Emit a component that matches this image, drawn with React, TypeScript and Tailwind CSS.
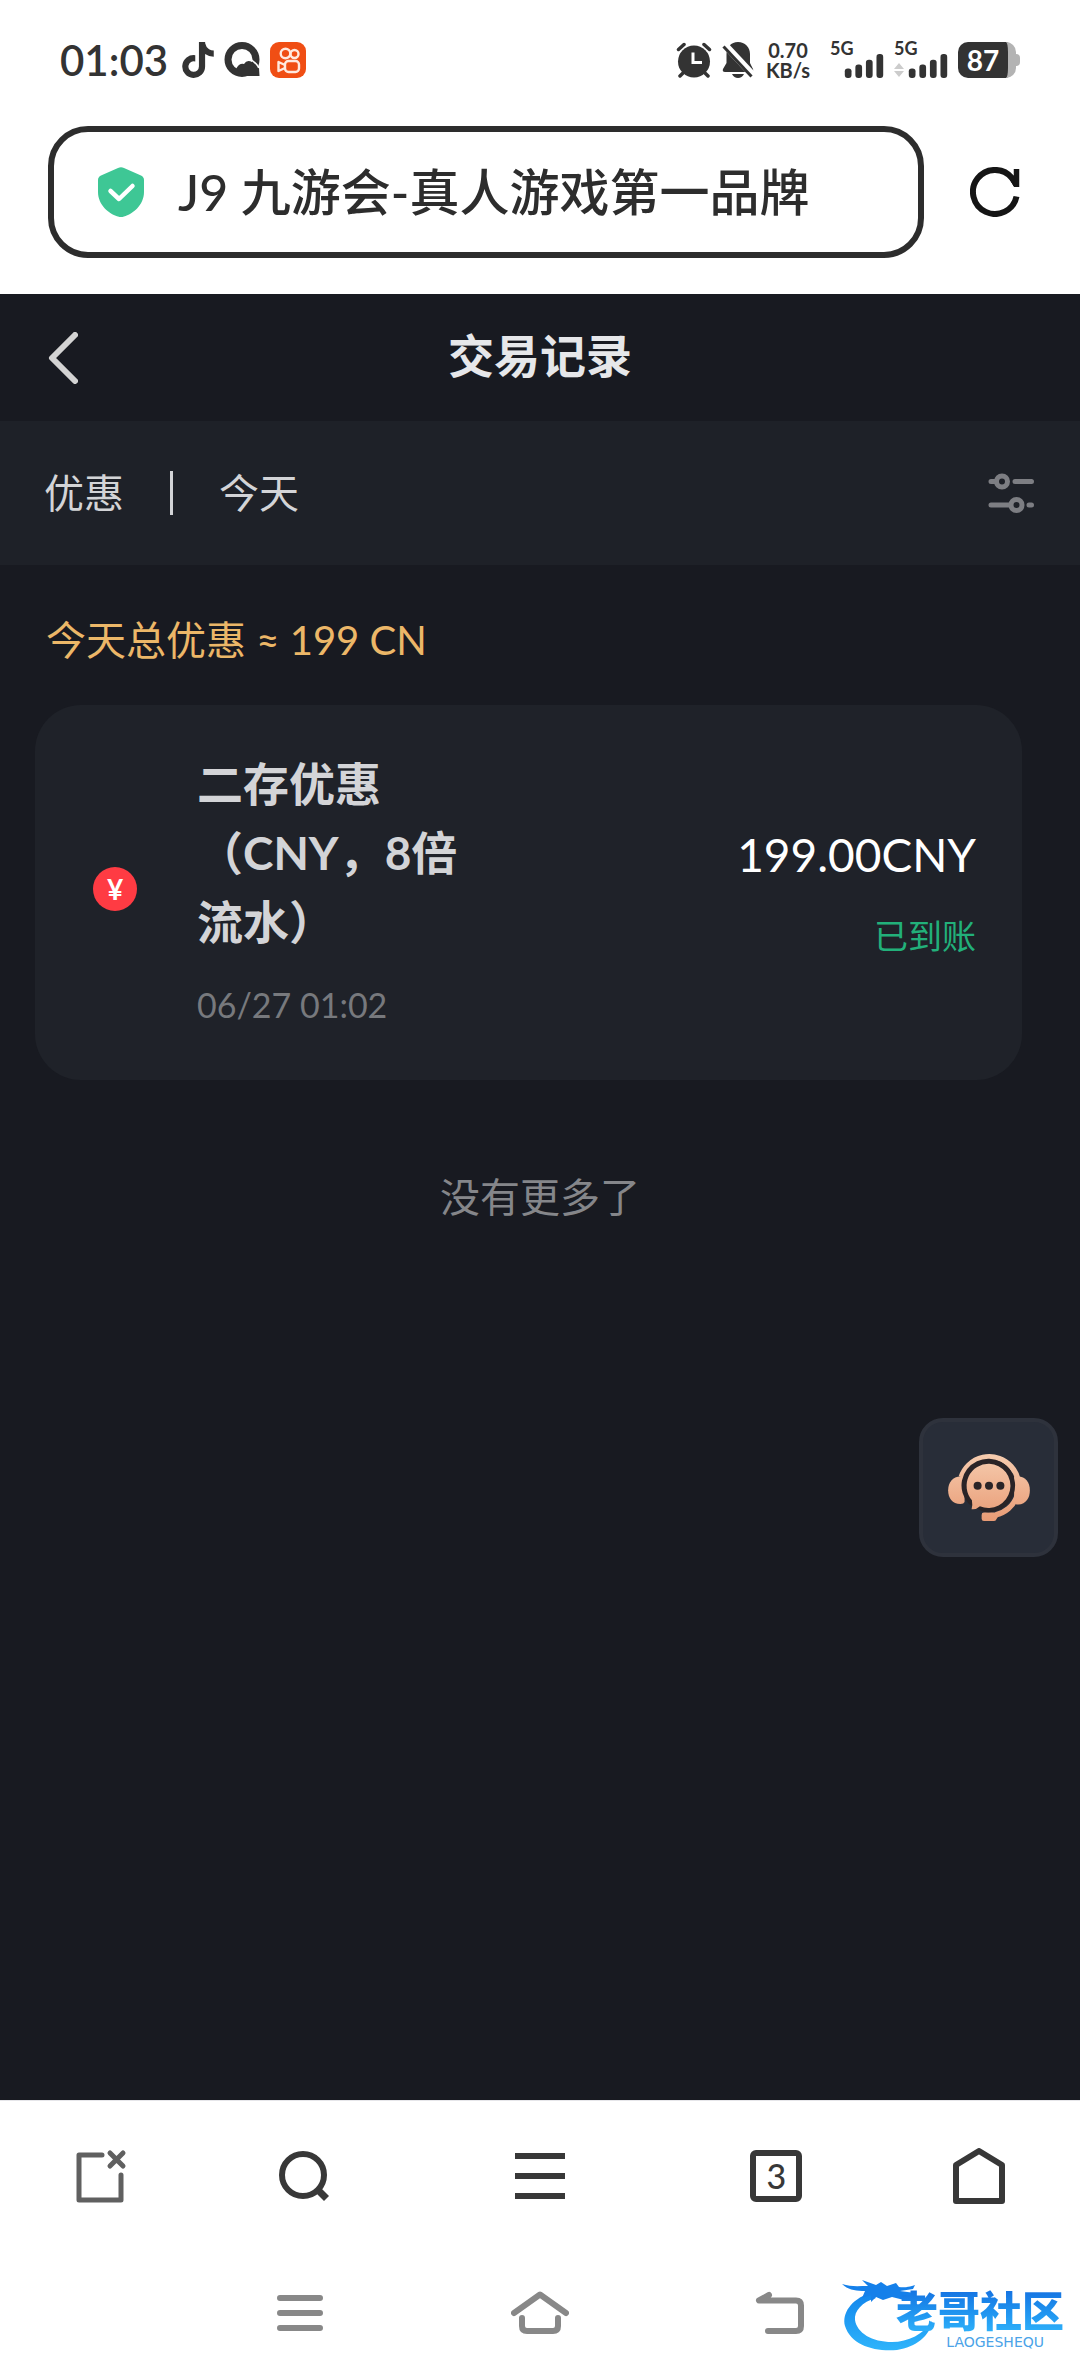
import { useState } from "react";
import { FaTiktok } from "react-icons/fa";

interface BonusRecord {
  id: number;
  title: string;
  time: string;
  amount: string;
  status: string;
}

const RECORDS: BonusRecord[] = [
  { id: 1, title: "二存优惠（CNY，8倍流水）", time: "06/27 01:02", amount: "199.00CNY", status: "已到账" },
];

function SignalBars() {
  return (
    <svg className="w-10 h-6" viewBox="0 0 40 25" fill="#333">
      <rect x="0" y="15" width="7" height="10" rx="3" />
      <rect x="11" y="11" width="7" height="14" rx="3" />
      <rect x="22" y="6" width="7" height="19" rx="3" />
      <rect x="33" y="0" width="7" height="25" rx="3" />
    </svg>
  );
}

function StatusBar() {
  return (
    <div className="h-[120px] pl-[60px] pr-[60px] flex items-center justify-between text-[#333]">
      <div className="flex items-center gap-[10px]">
        <span className="text-[42px] leading-none font-semibold mr-1">01:03</span>
        <FaTiktok className="w-8 h-9" />
        <svg className="w-9 h-9" viewBox="0 0 36 36">
          <circle cx="18" cy="17.5" r="14" fill="none" stroke="#333" strokeWidth="7" />
          <path d="M12 27 Q15 21 20 22 Q23 17 28 20 Q31 25 35 26 L35.500 34 H20 Z" fill="#333" />
          <path d="M25 17 Q31 19 35 26" fill="none" stroke="#fff" strokeWidth="1.500" />
        </svg>
        <svg className="w-9 h-9" viewBox="0 0 36 36">
          <rect width="36" height="36" rx="9" fill="#f04e14" />
          <g fill="none" stroke="#ffe9df" strokeWidth="2.400" strokeLinejoin="round">
            <circle cx="15.500" cy="11.500" r="4.800" />
            <circle cx="24.500" cy="12" r="4" />
            <rect x="15" y="19" width="14" height="11" rx="3.500" />
            <path d="M15 23 L8.500 20 V29 L15 26" />
          </g>
        </svg>
      </div>

      <div className="flex items-center gap-[10px]">
        <svg className="w-9 h-9" viewBox="0 0 36 36">
          <circle cx="18" cy="19.500" r="16" fill="#333" />
          <g fill="none" stroke="#333" strokeWidth="3.500" strokeLinecap="round">
            <path d="M2.500 7.500 L8 2.500 M33.500 7.500 L28 2.500 M7 31 L4 34 M29 31 L32 34" />
          </g>
          <path d="M17 10.500 V20.500 H26" fill="none" stroke="#fff" strokeWidth="3" />
        </svg>
        <svg className="w-8 h-9" viewBox="0 0 32 36">
          <path d="M16 0 C23 0 28 5 28 12 V21 L31 27 Q32 30 29 30 H3 Q0 30 1 27 L4.500 21 V12 C4.500 5 9 0 16 0 Z" fill="#333" />
          <path d="M10 32 H22 Q20 36 16 36 Q12 36 10 32 Z" fill="#333" />
          <path d="M2 2 L31 33" stroke="#fff" strokeWidth="7" />
          <path d="M1.500 4.500 L29.500 34.500" stroke="#333" strokeWidth="3" />
        </svg>
        <div className="mr-2 w-12 flex flex-col items-center text-[20px] leading-5 font-bold">
          <span>0.70</span>
          <span>KB/s</span>
        </div>
        <div className="w-[54px] h-9 flex flex-col">
          <span className="h-3 text-[18px] leading-3 font-bold">5G</span>
          <div className="flex justify-end">
            <SignalBars />
          </div>
        </div>
        <div className="w-[54px] h-9 flex flex-col">
          <span className="h-3 text-[18px] leading-3 font-bold">5G</span>
          <div className="flex justify-between items-end">
            <svg className="w-[10px] h-4" viewBox="0 0 10 16" fill="#ccc">
              <path d="M5 1 L10 7 H0 Z M0 9 H10 L5 15 Z" />
            </svg>
            <SignalBars />
          </div>
        </div>
        <div className="flex items-center">
          <div className="w-[58px] h-9 rounded-[10px] bg-[#333] border-r-8 border-[#b3b3b3] flex items-center justify-center text-white text-[28px] leading-none font-bold">
            87
          </div>
          <div className="w-1 h-3 rounded-r-sm bg-[#b3b3b3]" />
        </div>
      </div>
    </div>
  );
}

function AddressBar() {
  const [address, setAddress] = useState("J9 九游会-真人游戏第一品牌");

  return (
    <div className="flex items-center pl-12 pr-[60px] pt-[6px] pb-9">
      <label className="flex-1 min-w-0 h-[132px] flex items-center gap-[34px] pl-[44px] pr-8 rounded-[40px] border-[6px] border-[#2d2d2d]">
        <svg className="w-[46px] h-[50px] shrink-0" viewBox="0 0 46 50">
          <path d="M20 1 Q23 -.500 26 1 L43 8.500 Q46 10 46 13 V25 C46 38 35 47 26 49.500 Q23 50.500 20 49.500 C11 47 0 38 0 25 V13 Q0 10 3 8.500 Z" fill="#3ec795" />
          <path d="M12.500 24 L21 32 L34.500 19" fill="none" stroke="#fff" strokeWidth="4.500" strokeLinejoin="round" strokeLinecap="round" />
        </svg>
        <input
          type="text"
          aria-label="地址栏"
          value={address}
          onChange={(e) => setAddress(e.target.value)}
          className="flex-1 min-w-0 bg-transparent outline-none text-[50px] leading-[72px] font-medium text-[#2d2d2d]"
        />
      </label>
      <button type="button" aria-label="刷新" className="ml-[46px] cursor-pointer">
        <svg className="w-[50px] h-[50px]" viewBox="0 0 50 50" fill="none" stroke="#151515" strokeWidth="6">
          <path d="M46.500 29.500 A22 22 0 1 1 42 11 L46 17" />
          <path d="M46.500 2 V20" strokeWidth="5.500" />
          <path d="M40 12 L44 19 V10 Z" fill="#151515" strokeWidth="1" />
        </svg>
      </button>
    </div>
  );
}

function RecordCard({ record }: { record: BonusRecord }) {
  return (
    <li className="flex items-center rounded-[46px] bg-[#1f2229] pt-[44px] pb-12 pr-[46px]">
      <div className="w-[162px] shrink-0 pl-[58px] pb-1">
        <div className="w-11 h-11 rounded-full bg-[#ff3b43] flex items-center justify-center text-white text-[28px] leading-none font-bold">
          ¥
        </div>
      </div>
      <div className="flex-1">
        <h2 className="w-[280px] text-[46px] leading-[69px] font-bold text-[#d3d4d7]">{record.title}</h2>
        <p className="mt-[22px] text-[34px] leading-[54px] text-[#77797d]">{record.time}</p>
      </div>
      <div className="text-right">
        <p className="text-[46px] leading-[69px] text-white">{record.amount}</p>
        <p className="mt-[22px] text-[34px] leading-[50px] text-[#22b07a]">{record.status}</p>
      </div>
    </li>
  );
}

function SupportButton() {
  return (
    <button
      type="button"
      aria-label="在线客服"
      className="absolute right-[22px] bottom-[543px] w-[139px] h-[139px] rounded-[24px] bg-[#282d38] border-4 border-[#2e323c] flex items-center justify-center cursor-pointer"
    >
      <svg className="w-[82px] h-[69px]" viewBox="143 160 244 206">
        <defs>
          <linearGradient id="peach" gradientUnits="userSpaceOnUse" x1="0" y1="160" x2="0" y2="366">
            <stop offset="0" stopColor="#f6cdb0" />
            <stop offset="1" stopColor="#e89a74" />
          </linearGradient>
        </defs>
        <path d="M182 232 A88 88 0 1 1 285 345" fill="none" stroke="url(#peach)" strokeWidth="16" />
        <path d="M192 232 V306 Q190 312 180 312 C155 312 143 294 143 271 C143 248 157 230 180 230 Z" fill="url(#peach)" />
        <path d="M340 232 V306 Q342 314 352 314 C376 312 387 294 387 271 C387 248 374 230 352 230 Z" fill="url(#peach)" />
        <path d="M250 338 H300 L288 356 Q286 363 280 363 H250 Q243 363 243 356 V345 Q243 338 250 338 Z" fill="url(#peach)" />
        <path d="M205 312 A80 80 0 1 1 246 335" fill="#2a2427" />
        <path d="M266 192 A66 66 0 1 1 238 319 Q226 330 213 328 Q217 318 214 301 A66 66 0 0 1 266 192 Z" fill="url(#peach)" />
        <g fill="#2a2427">
          <circle cx="231" cy="258" r="12" />
          <circle cx="265" cy="258" r="12" />
          <circle cx="299" cy="258" r="12" />
        </g>
      </svg>
    </button>
  );
}

function BrowserToolbar() {
  return (
    <nav className="h-[150px] border-t border-[#e6e6ea] grid grid-cols-[3fr_3fr_4fr_3fr_3fr] place-items-center">
      <button type="button" aria-label="关闭标签页" className="cursor-pointer">
        <svg className="w-[52px] h-[54px]" viewBox="0 0 52 54" fill="none" stroke="#606060" strokeWidth="5" strokeLinecap="round" strokeLinejoin="round">
          <path d="M27 6 H4 V51 H46 V26" />
          <path d="M35 4 L48 17 M48 4 L35 17" />
        </svg>
      </button>
      <button type="button" aria-label="搜索" className="cursor-pointer">
        <svg className="w-[50px] h-[50px]" viewBox="0 0 50 50" fill="none" stroke="#383838">
          <circle cx="24" cy="24" r="21" strokeWidth="6" />
          <path d="M38 38 L47.500 47.500" strokeWidth="7" />
        </svg>
      </button>
      <button type="button" aria-label="菜单" className="cursor-pointer">
        <svg className="w-[50px] h-[46px]" viewBox="0 0 50 46" stroke="#383838" strokeWidth="6">
          <path d="M0 3 H50 M0 23 H50 M0 43 H50" />
        </svg>
      </button>
      <button
        type="button"
        aria-label="标签页"
        className="w-[52px] h-[52px] rounded-md border-[6px] border-[#383838] flex items-center justify-center text-[34px] leading-none font-medium text-[#383838] cursor-pointer"
      >
        3
      </button>
      <button type="button" aria-label="主页" className="cursor-pointer">
        <svg className="w-[52px] h-[56px]" viewBox="0 0 52 56" fill="none" stroke="#383838" strokeWidth="6" strokeLinejoin="round">
          <path d="M26 3 L49 17 V53 H3 V17 Z" />
        </svg>
      </button>
    </nav>
  );
}

function SystemNav() {
  return (
    <nav className="h-[126px] w-2/3 mx-auto grid grid-cols-3 place-items-center">
      <button type="button" aria-label="最近任务" className="cursor-pointer">
        <svg className="w-[46px] h-9" viewBox="0 0 46 36" stroke="#888" strokeWidth="6" strokeLinecap="round">
          <path d="M3 3 H43 M3 18 H43 M3 33 H43" />
        </svg>
      </button>
      <button type="button" aria-label="桌面" className="cursor-pointer">
        <svg className="w-[58px] h-[46px]" viewBox="0 0 58 46" fill="none" stroke="#888" strokeWidth="6" strokeLinecap="round" strokeLinejoin="round">
          <path d="M3 23 L29 4.500 L55 23" />
          <path d="M11 28 V36 Q11 41 16 41 H42 Q47 41 47 36 V28" />
        </svg>
      </button>
      <button type="button" aria-label="返回上一级" className="cursor-pointer">
        <svg className="w-[50px] h-11" viewBox="0 0 50 44" fill="none" stroke="#888" strokeWidth="6" strokeLinecap="round" strokeLinejoin="round">
          <path d="M14 4 L4 9.500 H41 Q46 9.500 46 14.500 V35 Q46 40 41 40 H13" />
        </svg>
      </button>
    </nav>
  );
}

function Watermark() {
  return (
    <div className="absolute right-[16px] bottom-[22px] w-[222px] h-[76px] pointer-events-none">
      <svg className="absolute left-0 top-0 w-[92px] h-[76px]" viewBox="0 0 92 76">
        <defs>
          <linearGradient id="dragon" x1="0" y1="0" x2="0" y2="1">
            <stop offset="0" stopColor="#1285ec" />
            <stop offset="1" stopColor="#2eb4fb" />
          </linearGradient>
        </defs>
        <path d="M28 15 C8 22 0 36 3 48 C9 67 32 74 55 72 C74 69 88 58 90 43 C82 56 66 64 50 64 C30 64 15 55 13 42 C12 33 20 24 34 20 Z" fill="url(#dragon)" />
        <path d="M0 6 C9 9 16 8 26 8 L20 2 L34 7 L39 4 L45 8 L54 5 L57 9 C64 10 70 8 73 7 L71 11 L58 13 L73 15 L70 19 L60 18 L62 22 L50 19 L41 22 L34 19 L29 24 L29 17 L20 20 L23 13 C14 13 6 12 0 6 Z" fill="#1580ea" />
      </svg>
      <div className="absolute right-0 bottom-[6px] flex flex-col items-end">
        <span className="bg-linear-to-b from-[#1673e2] to-[#2eb0fa] bg-clip-text text-transparent text-[42px] leading-[42px] font-black">老哥社区</span>
        <span className="mt-1 pr-5 text-[14px] leading-3 text-[#4ba3e8] font-['DejaVu_Sans',sans-serif]">LAOGESHEQU</span>
      </div>
    </div>
  );
}

export default function App() {
  return (
    <div className="relative min-h-screen flex flex-col bg-white font-['Lato','Noto_Sans_CJK_SC',sans-serif]">
      <StatusBar />
      <AddressBar />

      <main className="relative flex-1 bg-[#181a21]">
        <header className="h-[127px] grid grid-cols-3 items-center px-12">
          <button type="button" aria-label="返回" className="justify-self-start cursor-pointer">
            <svg className="w-[30px] h-[52px]" viewBox="0 0 30 52" fill="none" stroke="#d3d3d3" strokeWidth="6" strokeLinecap="round" strokeLinejoin="round">
              <path d="M27 3 L4 26 L27 49" />
            </svg>
          </button>
          <h1 className="justify-self-center pb-1 text-[46px] leading-[69px] font-semibold text-[#e6e7ea] whitespace-nowrap">交易记录</h1>
        </header>

        <div className="h-[144px] bg-[#1e2128] flex items-center pl-11 pr-[46px] text-[40px] leading-[60px] text-[#d3d4d7]">
          <button type="button" className="cursor-pointer">优惠</button>
          <span className="w-[3px] h-11 mx-[46px] bg-[#d3d4d7]" />
          <button type="button" className="cursor-pointer">今天</button>
          <button type="button" aria-label="筛选" className="ml-auto cursor-pointer">
            <svg className="w-[46px] h-10" viewBox="0 0 46 40" fill="none" stroke="#7d7e83" strokeWidth="5" strokeLinecap="round">
              <path d="M3 8.500 H7 M27 8.500 H43.500 M3 32 H22 M41 32 H43.500" />
              <circle cx="14" cy="8.500" r="5.500" />
              <circle cx="28.500" cy="32" r="5.500" />
            </svg>
          </button>
        </div>

        <p className="pt-[45px] px-[46px] text-[40px] leading-[60px] text-[#ecb768]">今天总优惠 ≈ 199 CN</p>
        <ul className="mt-[35px] ml-[35px] mr-[58px]">
          {RECORDS.map((record) => (
            <RecordCard key={record.id} record={record} />
          ))}
        </ul>
        <p className="mt-[87px] text-center text-[40px] leading-[60px] text-[#85868a]">没有更多了</p>

        <SupportButton />
      </main>

      <BrowserToolbar />
      <SystemNav />
      <Watermark />
    </div>
  );
}
